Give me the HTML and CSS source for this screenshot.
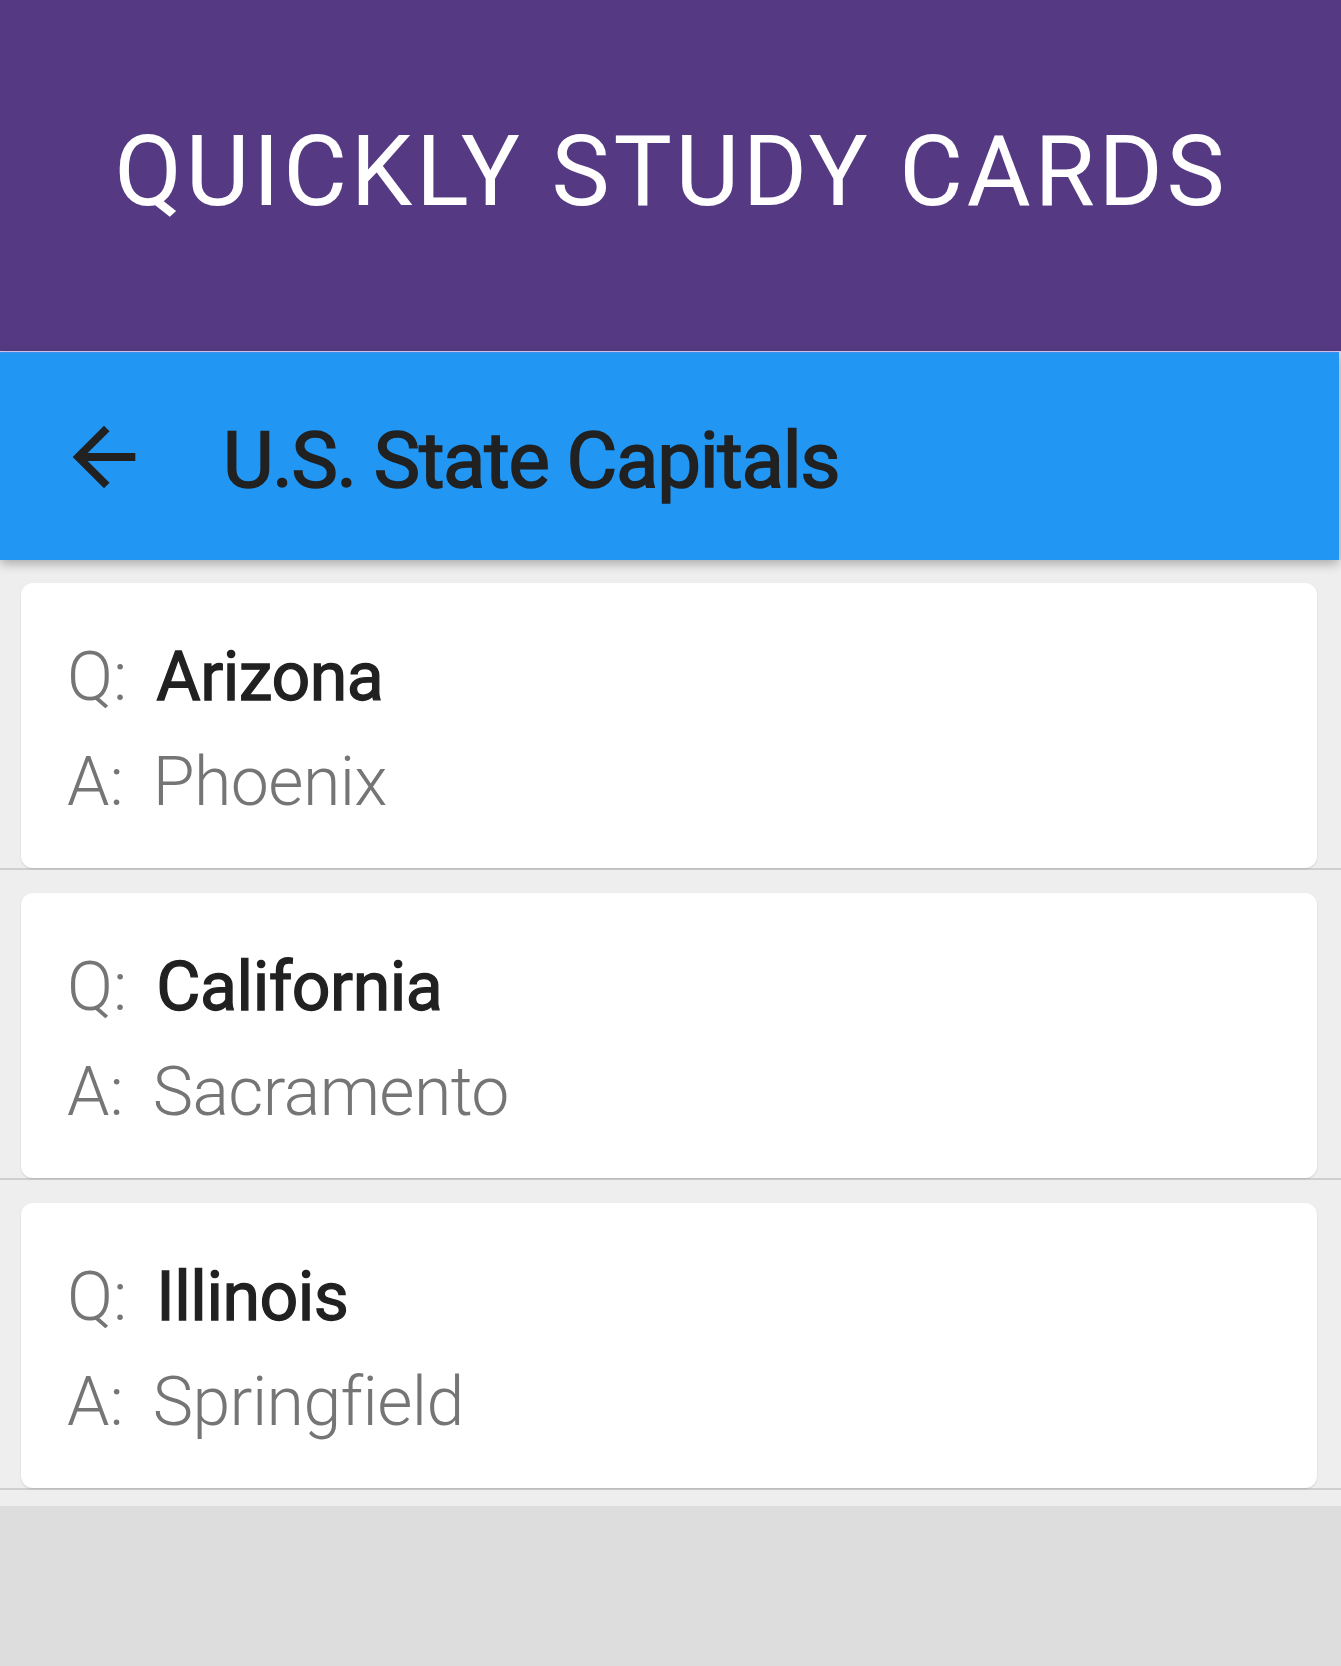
FILE: index.html
```html
<!DOCTYPE html>
<html>
<head>
<meta charset="utf-8">
<link rel="stylesheet" href="styles.css">
</head>
<body>
<header class="banner">
  <h1 class="banner-title">QUICKLY STUDY CARDS</h1>
</header>
<div class="toolbar">
  <svg class="back" viewBox="0 0 24 24"><path d="M20 11H7.83l5.59-5.59L12 4l-8 8 8 8 1.41-1.41L7.83 13H20v-2z"/></svg>
  <div class="toolbar-title">U.S. State Capitals</div>
</div>
<main class="list">
  <div class="item">
    <div class="card">
      <div class="row"><span class="label">Q:</span><span class="q">Arizona</span></div>
      <div class="row"><span class="label">A:</span><span class="a">Phoenix</span></div>
    </div>
  </div>
  <div class="item">
    <div class="card">
      <div class="row"><span class="label">Q:</span><span class="q">California</span></div>
      <div class="row"><span class="label">A:</span><span class="a">Sacramento</span></div>
    </div>
  </div>
  <div class="item">
    <div class="card">
      <div class="row"><span class="label">Q:</span><span class="q">Illinois</span></div>
      <div class="row"><span class="label">A:</span><span class="a">Springfield</span></div>
    </div>
  </div>
</main>
</body>
</html>
```
FILE: styles.css
```css
html, body {
  margin: 0;
  padding: 0;
}
body {
  background: #dddddd;
  font-family: Roboto, "Liberation Sans", sans-serif;
  min-height: 1666px;
}
.banner {
  height: 352px;
  background: #553a83;
  border-bottom: 1px solid #d9c9ee;
  display: flex;
  justify-content: center;
  box-sizing: border-box;
}
.banner-title {
  margin: 0;
  padding-top: 123px;
  padding-left: 2px;
  font-family: Roboto, "Liberation Sans", sans-serif;
  font-weight: 400;
  font-size: 98px;
  line-height: 1;
  color: #ffffff;
  letter-spacing: 3.7px;
}
.toolbar {
  height: 207px;
  background: #2196f3;
  border-top: 1px solid #3b8ff0;
  display: flex;
  align-items: center;
  position: relative;
  z-index: 1;
  box-shadow: 0 4px 10px rgba(0,0,0,0.28);
  margin-right: 2px;
}
.back {
  width: 94px;
  height: 94px;
  margin-left: 57px;
  fill: #212121;
  flex: none;
}
.toolbar-title {
  margin-left: 72px;
  font-family: Roboto, sans-serif;
  font-size: 78px;
  font-weight: 400;
  letter-spacing: -1.3px;
  -webkit-text-stroke: 1.6px #212121;
  color: #212121;
  padding-top: 8px;
}
.list {
  background: #eeeeee;
  padding-bottom: 16px;
}
.item {
  padding: 23px 24px 0 21px;
  border-bottom: 2px solid #cfcfcf;
}
.card {
  background: #ffffff;
  border-radius: 12px;
  height: 285px;
  box-sizing: border-box;
  padding: 42px 0 0 46px;
  box-shadow: 0 1px 2px rgba(0,0,0,0.12);
}
.row {
  display: flex;
  line-height: 105px;
  font-size: 68px;
}
.label {
  color: #757575;
  font-weight: 300;
  margin-right: 29px;
  flex: none;
}
.q {
  color: #212121;
  font-weight: 400;
  letter-spacing: -0.5px;
  -webkit-text-stroke: 1.3px #212121;
}
.a {
  color: #757575;
  font-weight: 300;
  letter-spacing: -0.6px;
}
```
